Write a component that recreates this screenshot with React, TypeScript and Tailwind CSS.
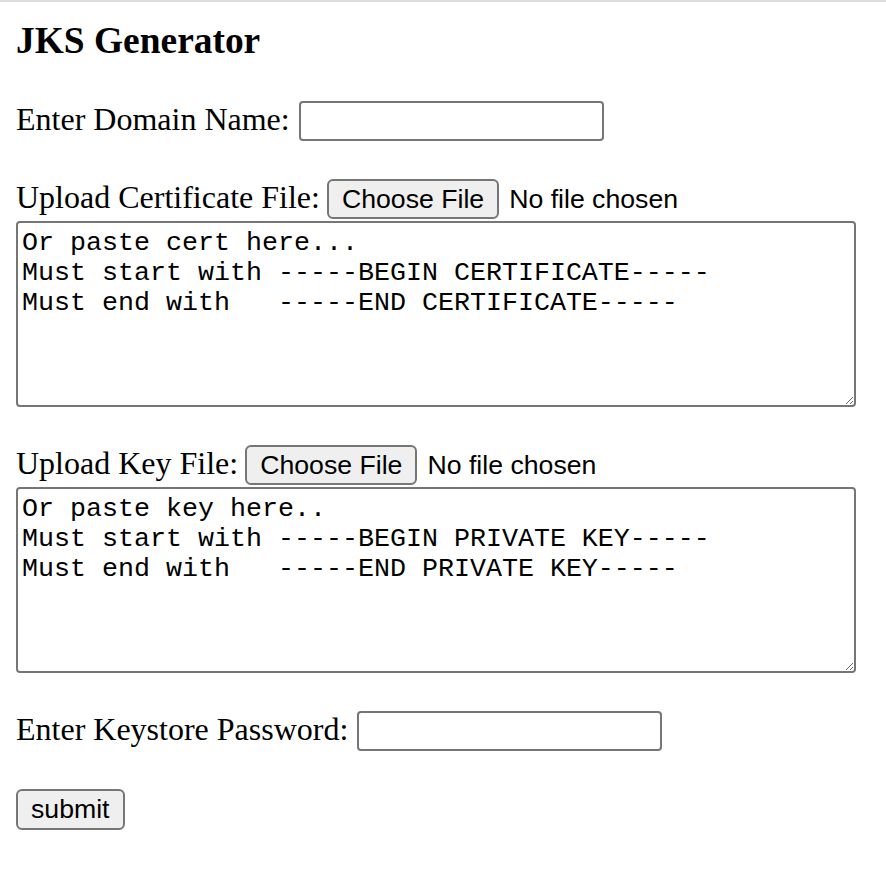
const serif = "font-['Liberation_Serif','Times_New_Roman',serif]";
const sans = "font-['Liberation_Sans',Arial,sans-serif]";

const CERT_TEXT = `Or paste cert here...
Must start with -----BEGIN CERTIFICATE-----
Must end with   -----END CERTIFICATE-----`;

const KEY_TEXT = `Or paste key here..
Must start with -----BEGIN PRIVATE KEY-----
Must end with   -----END PRIVATE KEY-----`;

function TextInput() {
  return (
    <input
      type="text"
      className="h-[40px] w-[305px] rounded-[4px] border-2 border-[#767676] bg-white px-[4px] text-[26.67px] outline-none"
    />
  );
}

function FileRow({ label }: { label: string }) {
  return (
    <div className="mt-[38px] flex h-[40px] items-center">
      <span className="mr-[7px] pb-[4px] text-[32px] leading-[35px]">{label}</span>
      <button
        type="button"
        className={`h-[40px] rounded-[6px] border-2 border-[#767676] bg-[#efefef] px-[13px] text-[26.67px] leading-none text-black ${sans}`}
      >
        Choose File
      </button>
      <span className={`ml-[10px] text-[26.67px] leading-none text-black ${sans}`}>
        No file chosen
      </span>
    </div>
  );
}

function PasteBox({ value }: { value: string }) {
  return (
    <textarea
      defaultValue={value}
      spellCheck={false}
      className="mt-[2px] block h-[186px] w-[840px] rounded-[4px] border-2 border-[#767676] bg-white px-[4px] pt-[5px] pb-[3px] font-['Liberation_Mono','Courier_New',monospace] text-[26.67px] leading-[30px] text-black outline-none"
    />
  );
}

export default function App() {
  return (
    <div className={`min-h-[884px] w-full bg-white text-black ${serif}`}>
      <div className="h-[2px] bg-[#dedede]" />
      <div className="px-[16px]">
        <h3 className="mt-[18px] text-[37.44px] font-bold leading-[41px]">JKS Generator</h3>

        <div className="mt-[40px] flex h-[40px] items-center">
          <span className="mr-[9px] pb-[4px] text-[32px] leading-[35px]">Enter Domain Name:</span>
          <TextInput />
        </div>

        <FileRow label="Upload Certificate File:" />
        <PasteBox value={CERT_TEXT} />

        <FileRow label="Upload Key File:" />
        <PasteBox value={KEY_TEXT} />

        <div className="mt-[38px] flex h-[40px] items-center">
          <span className="mr-[9px] pb-[4px] text-[32px] leading-[35px]">Enter Keystore Password:</span>
          <TextInput />
        </div>

        <button
          type="button"
          className={`mt-[38px] h-[41px] rounded-[6px] border-2 border-[#767676] bg-[#efefef] px-[13px] text-[26.67px] leading-none text-black ${sans}`}
        >
          submit
        </button>
      </div>
    </div>
  );
}
